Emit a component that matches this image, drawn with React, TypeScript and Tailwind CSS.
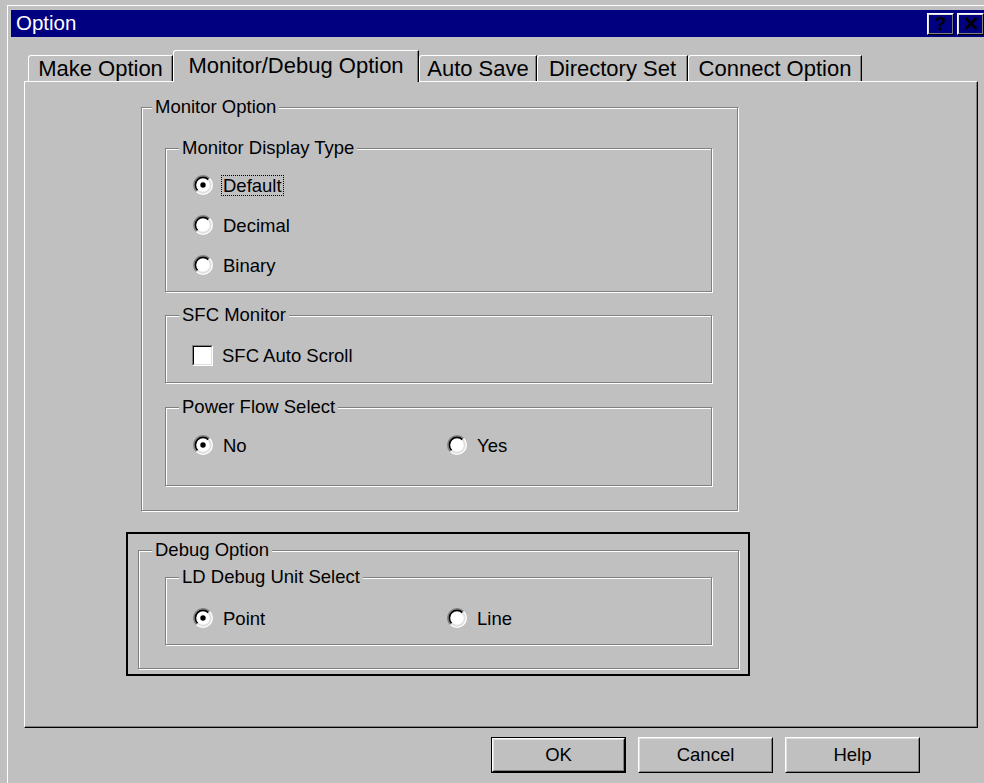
import React from "react";

type Tab = { label: string; w: string; active?: boolean };

const TABS: Tab[] = [
  { label: "Make Option", w: "w-[145px]" },
  { label: "Monitor/Debug Option", w: "w-[246px]", active: true },
  { label: "Auto Save", w: "w-[118px]" },
  { label: "Directory Set", w: "w-[151px]" },
  { label: "Connect Option", w: "w-[174px]" },
];

function arcPath(r: number, upperLeft: boolean) {
  const c = 10;
  const bl = [c + r * Math.cos((3 * Math.PI) / 4), c + r * Math.sin((3 * Math.PI) / 4)];
  const tr = [c + r * Math.cos(-Math.PI / 4), c + r * Math.sin(-Math.PI / 4)];
  return upperLeft
    ? `M${bl[0]} ${bl[1]} A${r} ${r} 0 0 1 ${tr[0]} ${tr[1]}`
    : `M${tr[0]} ${tr[1]} A${r} ${r} 0 0 1 ${bl[0]} ${bl[1]}`;
}

function RadioMark({ checked }: { checked?: boolean }) {
  return (
    <svg width="20" height="20" viewBox="0 0 20 20" className="shrink-0">
      <circle cx="10" cy="10" r="7.6" fill="#fff" />
      <path d={arcPath(9.2, true)} stroke="#808080" strokeWidth="1.6" fill="none" />
      <path d={arcPath(9.2, false)} stroke="#ffffff" strokeWidth="1.6" fill="none" />
      <path d={arcPath(7.6, true)} stroke="#000000" strokeWidth="1.6" fill="none" />
      <path d={arcPath(7.6, false)} stroke="#dfdfdf" strokeWidth="1.6" fill="none" />
      {checked && <circle cx="10" cy="10" r="2.7" fill="#000" />}
    </svg>
  );
}

function Radio({ label, checked, focused }: { label: string; checked?: boolean; focused?: boolean }) {
  return (
    <div className="flex h-[20px] items-center gap-[8px]">
      <RadioMark checked={checked} />
      <span
        className={
          focused
            ? "border border-dotted border-black px-[1px] leading-[19px]"
            : "border border-transparent px-[1px] leading-[19px]"
        }
      >
        {label}
      </span>
    </div>
  );
}

function CheckBox({ label }: { label: string }) {
  return (
    <div className="flex h-[20px] items-center gap-[9px]">
      <div className="h-[21px] w-[21px] border border-b-white border-l-[#808080] border-r-white border-t-[#808080]">
        <div className="h-full w-full border-[1.5px] border-b-[#dfdfdf] border-l-black border-r-[#dfdfdf] border-t-black bg-white" />
      </div>
      <span className="leading-[19px]">{label}</span>
    </div>
  );
}

function Group({
  label,
  className,
  labelLeft = "left-[13px]",
  children,
}: {
  label: string;
  className: string;
  labelLeft?: string;
  children?: React.ReactNode;
}) {
  return (
    <div
      className={`relative border border-[#808080] shadow-[inset_1px_1px_0_#ffffff,1px_1px_0_#ffffff] ${className}`}
    >
      <span className={`absolute top-[-11px] ${labelLeft} bg-[#c0c0c0] px-[3px] leading-[20px]`}>
        {label}
      </span>
      {children}
    </div>
  );
}

function Bevel({ children, className }: { children: React.ReactNode; className?: string }) {
  return (
    <div className={`border border-b-black border-l-white border-r-black border-t-white ${className ?? ""}`}>
      <div className="flex h-full w-full items-center justify-center border border-b-[#808080] border-l-[#dfdfdf] border-r-[#808080] border-t-[#dfdfdf]">
        {children}
      </div>
    </div>
  );
}

function DialogButton({ label, isDefault }: { label: string; isDefault?: boolean }) {
  if (isDefault) {
    return (
      <div className="h-[36px] w-[135px] border-[1.5px] border-black">
        <Bevel className="h-full w-full">{label}</Bevel>
      </div>
    );
  }
  return <Bevel className="h-[36px] w-[135px]">{label}</Bevel>;
}

export default function App() {
  return (
    <div className="h-[783px] w-[984px] overflow-hidden bg-[#c0c0c0] pl-[7px] pt-[5px] font-['Liberation_Sans',Arial,sans-serif] text-[18.5px] text-black">
      <div className="h-full border-l border-t border-l-white border-t-white pl-[3px] pt-[4px]">
        {/* caption */}
        <div className="flex h-[27px] items-center justify-between bg-[#000080] pl-[5px]">
          <span className="text-[20.5px] leading-none text-white">Option</span>
          <div className="flex gap-[3px]">
            <Bevel className="h-[22px] w-[27px]">
              <span className="text-[19px] font-bold leading-none">?</span>
            </Bevel>
            <Bevel className="h-[22px] w-[27px]">
              <svg width="14" height="13" viewBox="0 0 14 13">
                <path d="M1.5 1 L12.5 12 M12.5 1 L1.5 12" stroke="#000" strokeWidth="2.8" />
              </svg>
            </Bevel>
          </div>
        </div>

        {/* tab strip */}
        <div className="mt-[13px] flex h-[31px] items-end pl-[17px] text-[22px]">
          {TABS.map((t) =>
            t.active ? (
              <div
                key={t.label}
                className={`relative z-10 -mb-[1px] flex h-[32px] ${t.w} items-center justify-center rounded-tl-[3px] border-l border-r border-t border-l-white border-r-black border-t-white bg-[#c0c0c0] pb-[3px] shadow-[inset_-1px_0_0_#808080]`}
              >
                {t.label}
              </div>
            ) : (
              <div
                key={t.label}
                className={`flex h-[26px] ${t.w} items-center justify-center rounded-tl-[3px] border-l border-r border-t border-l-white border-r-black border-t-white shadow-[inset_-1px_0_0_#808080]`}
              >
                {t.label}
              </div>
            )
          )}
        </div>

        {/* tab page */}
        <div className="ml-[13px] h-[647px] w-[954px] border border-b-black border-l-white border-r-black border-t-white">
          <div className="h-full w-full border-b border-r border-b-[#808080] border-r-[#808080] pl-[116px] pt-[25px]">
            <Group label="Monitor Option" className="h-[404px] w-[597px] pl-[23px] pt-[40px]" labelLeft="left-[10px]">
              <Group label="Monitor Display Type" className="h-[144px] w-[547px] pl-[27px] pt-[26px]">
                <div className="flex flex-col gap-[20px]">
                  <Radio label="Default" checked focused />
                  <Radio label="Decimal" />
                  <Radio label="Binary" />
                </div>
              </Group>
              <Group label="SFC Monitor" className="mt-[23px] h-[68px] w-[547px] pl-[26px] pt-[29px]">
                <CheckBox label="SFC Auto Scroll" />
              </Group>
              <Group label="Power Flow Select" className="mt-[24px] h-[79px] w-[547px] pl-[27px] pt-[27px]">
                <div className="flex">
                  <div className="w-[254px]">
                    <Radio label="No" checked />
                  </div>
                  <Radio label="Yes" />
                </div>
              </Group>
            </Group>

            <div className="-ml-[15px] mt-[21px] h-[144px] w-[624px] border-2 border-black pl-[10px] pt-[16px]">
              <Group label="Debug Option" className="h-[119px] w-[601px] pl-[26px] pt-[26px]">
                <Group label="LD Debug Unit Select" className="h-[68px] w-[547px] pl-[27px] pt-[30px]">
                  <div className="flex">
                    <div className="w-[254px]">
                      <Radio label="Point" checked />
                    </div>
                    <Radio label="Line" />
                  </div>
                </Group>
              </Group>
            </div>
          </div>
        </div>

        {/* dialog buttons */}
        <div className="mt-[9px] flex justify-end gap-[12px] pr-[64px]">
          <DialogButton label="OK" isDefault />
          <DialogButton label="Cancel" />
          <DialogButton label="Help" />
        </div>
      </div>
    </div>
  );
}
